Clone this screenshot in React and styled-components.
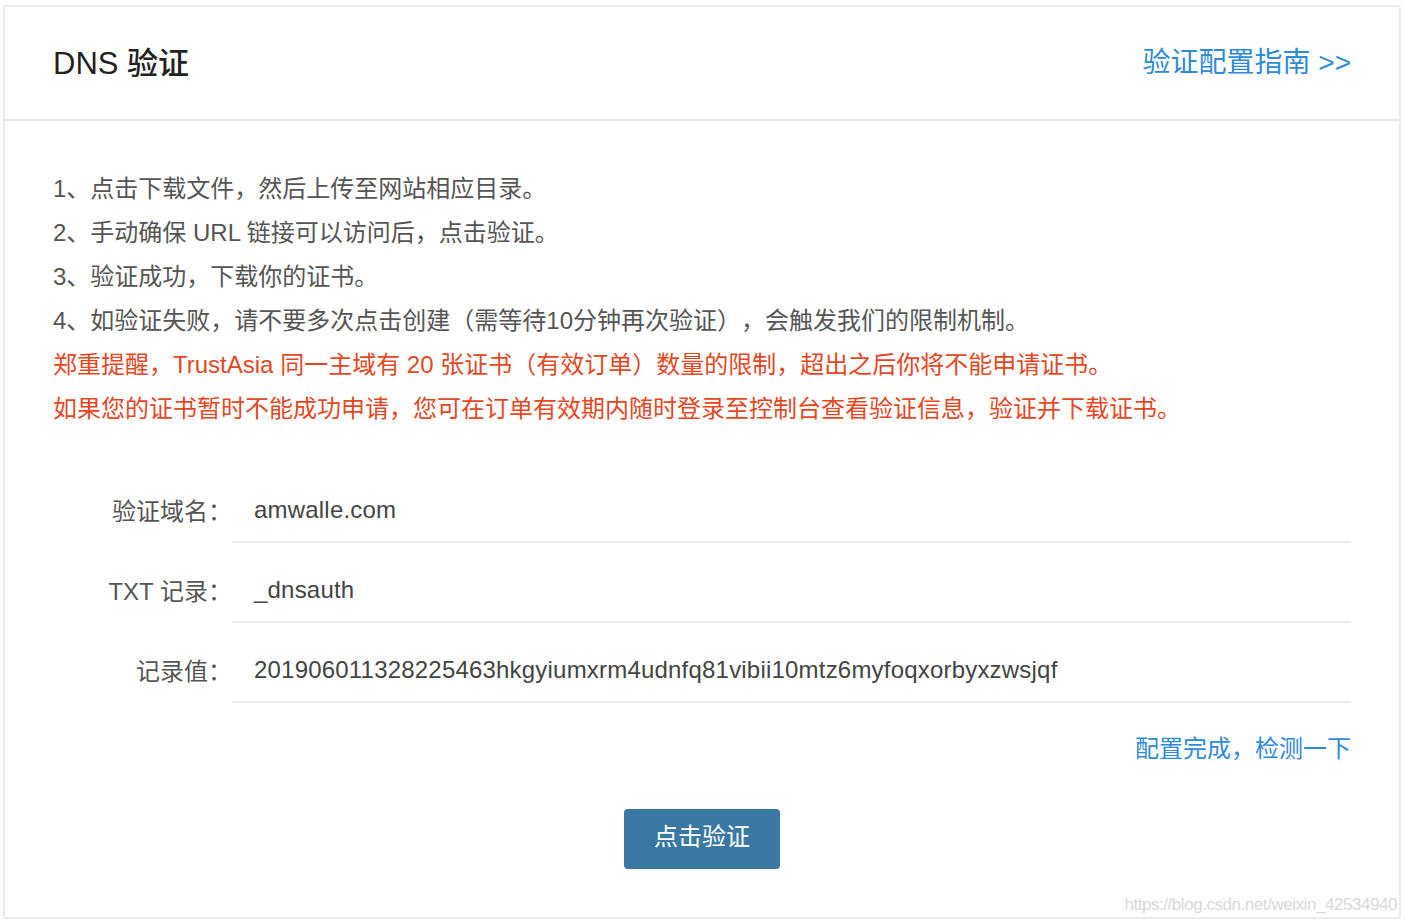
import styled, { createGlobalStyle } from 'styled-components';

const GlobalStyle = createGlobalStyle`
  html, body {
    margin: 0;
    padding: 0;
    background: #ffffff;
  }
  body {
    font-family: "Liberation Sans", "Noto Sans CJK SC", sans-serif;
    text-spacing-trim: space-all;
  }
`;

const Page = styled.div`
  padding: 5px 5px 5px 3px;
  width: 1406px;
  box-sizing: border-box;
`;

const Card = styled.div`
  position: relative;
  border: 2px solid #ebebeb;
  border-radius: 3px;
  background: #fff;
`;

const Header = styled.div`
  display: flex;
  justify-content: space-between;
  align-items: center;
  height: 112px;
  padding: 0 48px;
  border-bottom: 2px solid #e8e8e8;
`;

const Title = styled.h2`
  margin: 0;
  font-size: 31px;
  font-weight: 500;
  color: #222;
  line-height: 1;
`;

const GuideLink = styled.a`
  font-size: 28px;
  color: #2e8bd8;
  text-decoration: none;
  line-height: 1;
`;

const Body = styled.div`
  padding: 46px 48px 48px;
  display: flex;
  flex-direction: column;
`;

const Notes = styled.div`
  margin-bottom: 32px;
`;

const Note = styled.p`
  margin: 0;
  font-size: 24px;
  line-height: 44px;
  color: ${(p) => (p.$warn ? '#e5471f' : '#555')};
  white-space: nowrap;
`;

const Form = styled.div`
  display: grid;
  grid-template-columns: 179px 1fr;
`;

const Label = styled.div`
  height: 80px;
  display: flex;
  align-items: flex-end;
  justify-content: flex-end;
  padding-bottom: 19px;
  box-sizing: border-box;
  font-size: 24px;
  line-height: 24px;
  color: #555;
  white-space: nowrap;
`;

const Value = styled.div`
  height: 80px;
  display: flex;
  align-items: flex-end;
  padding: 0 0 19px 22px;
  box-sizing: border-box;
  border-bottom: 2px solid #e9e9e9;
  font-size: 24px;
  line-height: 24px;
  color: #444;
  letter-spacing: 0.2px;
`;

const CheckRow = styled.div`
  display: flex;
  justify-content: flex-end;
  margin-top: 24px;
`;

const CheckLink = styled.a`
  font-size: 24px;
  line-height: 44px;
  color: #2e8bd8;
  text-decoration: none;
`;

const Actions = styled.div`
  display: flex;
  justify-content: center;
  margin-top: 38px;
`;

const VerifyButton = styled.button`
  width: 156px;
  height: 60px;
  padding: 0 0 4px;
  border: none;
  border-radius: 4px;
  background: #3a78a1;
  color: #fff;
  font-family: inherit;
  font-size: 24px;
  line-height: 1;
  cursor: pointer;
`;

const Watermark = styled.span`
  position: absolute;
  right: 2px;
  bottom: 2px;
  font-size: 17px;
  color: #d8d8d8;
  letter-spacing: -0.45px;
  pointer-events: none;
`;

const fields = [
  { label: '验证域名：', value: 'amwalle.com' },
  { label: 'TXT 记录：', value: '_dnsauth' },
  { label: '记录值：', value: '201906011328225463hkgyiumxrm4udnfq81vibii10mtz6myfoqxorbyxzwsjqf' },
];

export default function App() {
  return (
    <Page>
      <GlobalStyle />
      <Card>
        <Header>
          <Title>DNS 验证</Title>
          <GuideLink href="#">验证配置指南 &gt;&gt;</GuideLink>
        </Header>
        <Body>
          <Notes>
            <Note>1、点击下载文件，然后上传至网站相应目录。</Note>
            <Note>2、手动确保 URL 链接可以访问后，点击验证。</Note>
            <Note>3、验证成功，下载你的证书。</Note>
            <Note>4、如验证失败，请不要多次点击创建（需等待10分钟再次验证），会触发我们的限制机制。</Note>
            <Note $warn>郑重提醒，TrustAsia 同一主域有 20 张证书（有效订单）数量的限制，超出之后你将不能申请证书。</Note>
            <Note $warn>如果您的证书暂时不能成功申请，您可在订单有效期内随时登录至控制台查看验证信息，验证并下载证书。</Note>
          </Notes>
          <Form>
            {fields.map((f) => [
              <Label key={f.label + 'l'}>{f.label}</Label>,
              <Value key={f.label + 'v'}>{f.value}</Value>,
            ])}
          </Form>
          <CheckRow>
            <CheckLink href="#">配置完成，检测一下</CheckLink>
          </CheckRow>
          <Actions>
            <VerifyButton>点击验证</VerifyButton>
          </Actions>
        </Body>
        <Watermark>https://blog.csdn.net/weixin_42534940</Watermark>
      </Card>
    </Page>
  );
}
